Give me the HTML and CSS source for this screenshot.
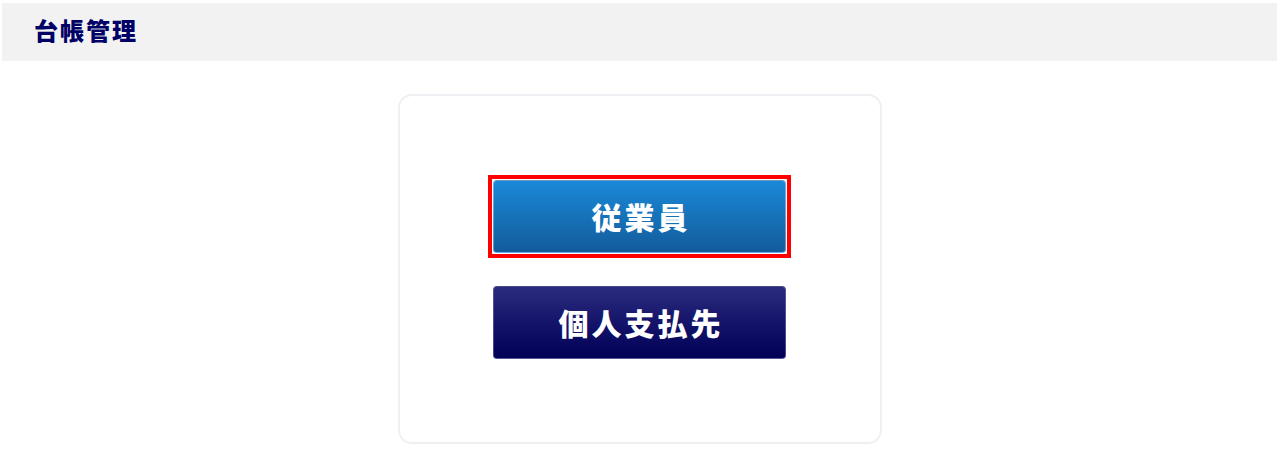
FILE: index.html
```html
<!DOCTYPE html>
<html lang="ja">
<head>
<meta charset="utf-8">
<title>台帳管理</title>
<link rel="stylesheet" href="styles.css">
</head>
<body>
<header class="page-header">
  <h1 class="page-title">台帳管理</h1>
</header>
<main class="content">
  <section class="menu-card">
    <div class="focus-ring">
      <button class="menu-btn menu-btn--blue" type="button">従業員</button>
    </div>
    <button class="menu-btn menu-btn--navy" type="button">個人支払先</button>
  </section>
</main>
</body>
</html>
```
FILE: styles.css
```css
html, body {
  margin: 0;
  padding: 0;
  background: #ffffff;
}
body {
  font-family: "Noto Sans CJK JP", "Noto Sans", sans-serif;
  padding: 3px 3px 0 2px;
}
.page-header {
  height: 58px;
  background: #f2f2f2;
  display: flex;
  align-items: center;
  padding-left: 32px;
}
.page-title {
  margin: 0 0 5px 0;
  font-size: 24px;
  font-weight: 900;
  letter-spacing: 2px;
  color: #000066;
  line-height: 1;
}
.content {
  display: flex;
  justify-content: center;
  padding-top: 33px;
}
.menu-card {
  width: 480px;
  height: 346px;
  border: 2px solid #eef0f4;
  border-radius: 14px;
  display: flex;
  flex-direction: column;
  align-items: center;
  justify-content: center;
  gap: 33px;
}
.focus-ring {
  border: 4px solid #ff0000;
  padding: 1px;
  margin: -5px;
  display: flex;
}
.menu-btn {
  width: 293px;
  height: 73px;
  border-radius: 4px;
  border: 1px solid rgba(255,255,255,0.35);
  color: #ffffff;
  font-family: "Noto Sans CJK JP", sans-serif;
  font-size: 30px;
  font-weight: 900;
  letter-spacing: 3px;
  padding: 0 0 0 3px;
  line-height: 1;
  cursor: pointer;
}
.menu-btn--blue {
  background: linear-gradient(to bottom, #1a89da 0%, #1672b8 50%, #125c9c 100%);
}
.menu-btn--navy {
  background: linear-gradient(to bottom, #2b2b7e 0%, #14146a 50%, #000056 100%);
  border-color: rgba(120,120,170,0.6);
}
```
